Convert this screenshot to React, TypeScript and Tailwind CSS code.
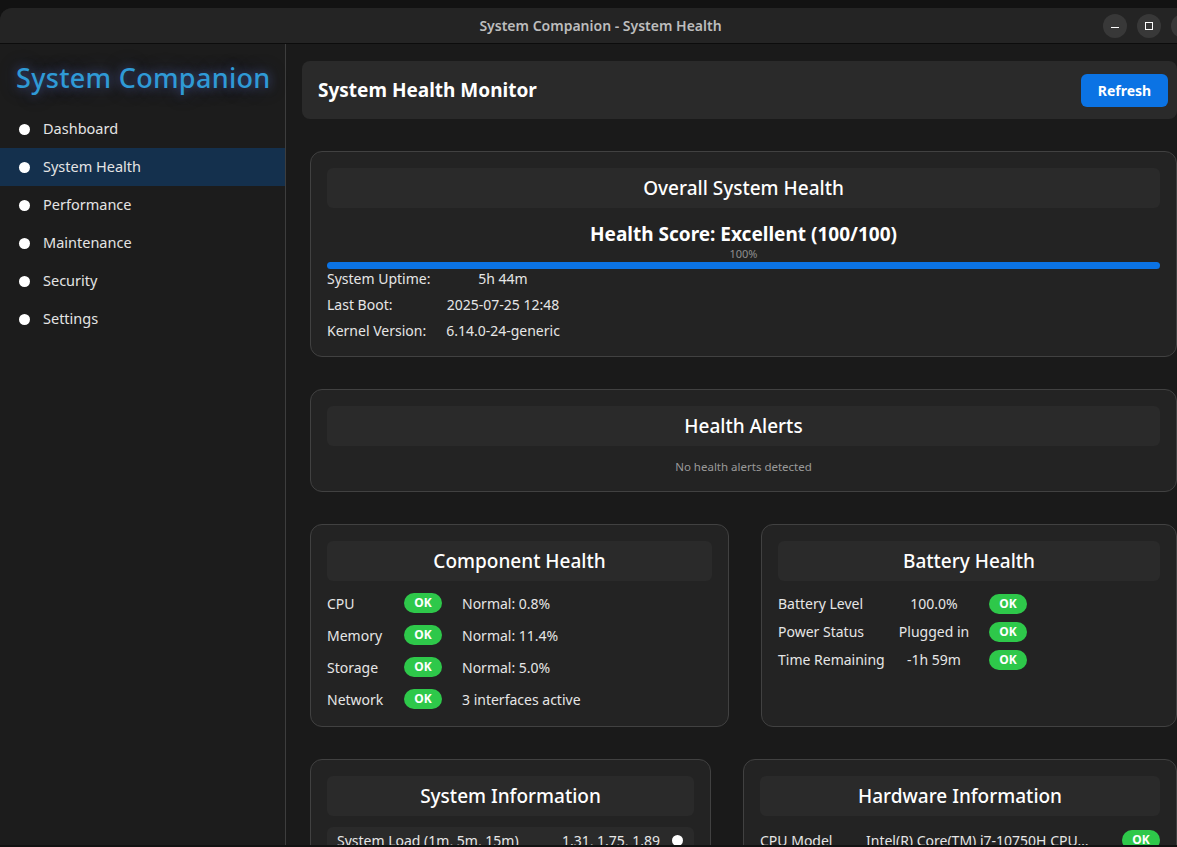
import React from 'react';

const font = { fontFamily: '"Noto Sans", "DejaVu Sans", sans-serif' };

const navItems = ['Dashboard', 'System Health', 'Performance', 'Maintenance', 'Security', 'Settings'];

const Ok: React.FC = () => (
  <span className="inline-flex h-[20px] w-[38px] items-center justify-center rounded-full bg-[#2ec84a] text-[12px] font-bold text-white">
    OK
  </span>
);

const CardHeader: React.FC<{ title: string }> = ({ title }) => (
  <div className="flex h-[40px] items-center justify-center rounded-md bg-[#2a2a2a] text-[19px] font-medium text-white">
    {title}
  </div>
);

const Card: React.FC<{ className?: string; children: React.ReactNode }> = ({ className = '', children }) => (
  <div className={`rounded-xl border border-[#414141] bg-[#232323] p-4 ${className}`}>{children}</div>
);

const App: React.FC = () => {
  return (
    <div style={font} className="h-[847px] w-[1177px] overflow-hidden bg-[#121212] pt-2">
      {/* Window */}
      <div className="flex h-[837px] flex-col overflow-hidden rounded-tl-xl bg-[#1a1a1a]">
        {/* Title bar */}
        <div className="relative flex h-[36px] shrink-0 items-center justify-center border-b border-[#0c0c0c] bg-[#242424] pl-[24px]">
          <span className="text-[14px] font-semibold text-[#bdbdbd]">System Companion - System Health</span>
          <div className="absolute right-[-18px] top-[6px] flex gap-[10px]">
            <span className="flex h-[24px] w-[24px] items-center justify-center rounded-full bg-[#383838]">
              <span className="mt-[3px] h-[1.5px] w-[8px] bg-white" />
            </span>
            <span className="flex h-[24px] w-[24px] items-center justify-center rounded-full bg-[#383838]">
              <span className="h-[8px] w-[8px] border-[1.5px] border-white" />
            </span>
            <span className="flex h-[24px] w-[24px] items-center justify-center rounded-full bg-[#383838]" />
          </div>
        </div>

        <div className="flex min-h-0 flex-1">
          {/* Sidebar */}
          <aside className="w-[286px] shrink-0 border-r border-[#3d3d3d] bg-[#1c1c1c]">
            <div className="flex h-[65px] items-center pl-[16px] pt-[3px]">
              <h1
                className="text-[27px] font-medium tracking-[0.3px] text-[#2f9ad6]"
                style={{ textShadow: '0 0 10px rgba(90,110,200,0.55), 0 0 20px rgba(70,90,180,0.35)' }}
              >
                System Companion
              </h1>
            </div>
            <nav className="pt-[1px]">
              {navItems.map(item => (
                <div
                  key={item}
                  className={`flex h-[38px] items-center gap-[13px] pl-[19px] text-[14.5px] text-[#e4e4e4] ${
                    item === 'System Health' ? 'bg-[#14304d]' : ''
                  }`}
                >
                  <span className="h-[11px] w-[11px] rounded-full bg-white" />
                  {item}
                </div>
              ))}
            </nav>
          </aside>

          {/* Main */}
          <main className="min-w-0 flex-1 overflow-hidden pl-[16px] pt-[17px]">
            <div className="w-[900px]">
              <div className="flex h-[58px] w-[875px] items-center justify-between rounded-lg bg-[#2a2a2a] pl-[16px] pr-[9px]">
                <h2 className="text-[19px] font-bold text-white">System Health Monitor</h2>
                <button className="h-[33px] w-[87px] rounded-md bg-[#0b73e4] text-[14px] font-bold text-white">Refresh</button>
              </div>

              <div className="ml-[8px] w-[867px]">
                {/* Overall */}
                <Card className="mt-[32px] h-[206px]">
                  <CardHeader title="Overall System Health" />
                  <div className="mt-[13px] text-center text-[19px] font-bold leading-[26px] text-white">
                    Health Score: Excellent (100/100)
                  </div>
                  <div className="text-center text-[11px] leading-[14px] text-[#8f8f8f]">100%</div>
                  <div className="mt-[1px] h-[7px] rounded-full bg-[#0b73e4]" />
                  <div className="grid grid-cols-[113px_126px] gap-y-[6px] text-[14px] leading-[20px] text-[#e6e6e6]">
                    <span>System Uptime:</span>
                    <span className="text-center">5h 44m</span>
                    <span>Last Boot:</span>
                    <span className="text-center">2025-07-25 12:48</span>
                    <span>Kernel Version:</span>
                    <span className="text-center">6.14.0-24-generic</span>
                  </div>
                </Card>

                {/* Alerts */}
                <Card className="mt-[32px] h-[103px]">
                  <CardHeader title="Health Alerts" />
                  <div className="mt-[12px] text-center text-[11.5px] text-[#9a9a9a]">No health alerts detected</div>
                </Card>

                {/* Component + Battery */}
                <div className="mt-[32px] flex gap-[32px]">
                  <Card className="h-[203px] w-[419px]">
                    <CardHeader title="Component Health" />
                    <div className="mt-[12px] flex flex-col gap-[12px] text-[14px] text-[#e6e6e6]">
                      {[
                        ['CPU', 'Normal: 0.8%'],
                        ['Memory', 'Normal: 11.4%'],
                        ['Storage', 'Normal: 5.0%'],
                        ['Network', '3 interfaces active'],
                      ].map(([k, v]) => (
                        <div key={k} className="flex h-[20px] items-center">
                          <span className="w-[77px]">{k}</span>
                          <Ok />
                          <span className="ml-[20px]">{v}</span>
                        </div>
                      ))}
                    </div>
                  </Card>
                  <Card className="h-[203px] flex-1">
                    <CardHeader title="Battery Health" />
                    <div className="mt-[12px] flex flex-col gap-[8px] text-[14px] text-[#e6e6e6]">
                      {[
                        ['Battery Level', '100.0%'],
                        ['Power Status', 'Plugged in'],
                        ['Time Remaining', '-1h 59m'],
                      ].map(([k, v]) => (
                        <div key={k} className="flex h-[20px] items-center">
                          <span className="w-[115px]">{k}</span>
                          <span className="w-[82px] text-center">{v}</span>
                          <span className="ml-[14px]">
                            <Ok />
                          </span>
                        </div>
                      ))}
                    </div>
                  </Card>
                </div>

                {/* System + Hardware info */}
                <div className="mt-[32px] flex gap-[32px]">
                  <Card className="h-[200px] w-[401px]">
                    <CardHeader title="System Information" />
                    <div className="mt-[11px] flex h-[26px] items-center rounded-md bg-[#2a2a2a] pl-[10px] pr-[11px] text-[14px] text-[#e6e6e6]">
                      <span className="flex-1">System Load (1m, 5m, 15m)</span>
                      <span>1.31, 1.75, 1.89</span>
                      <span className="ml-[12px] h-[11px] w-[11px] rounded-full bg-white" />
                    </div>
                  </Card>
                  <Card className="h-[200px] flex-1">
                    <CardHeader title="Hardware Information" />
                    <div className="mt-[11px] flex h-[26px] items-center text-[14px] text-[#e6e6e6]">
                      <span className="w-[106px]">CPU Model</span>
                      <span className="flex-1">Intel(R) Core(TM) i7-10750H CPU…</span>
                      <Ok />
                    </div>
                  </Card>
                </div>
              </div>
            </div>
          </main>
        </div>
      </div>
    </div>
  );
};

export default App;
